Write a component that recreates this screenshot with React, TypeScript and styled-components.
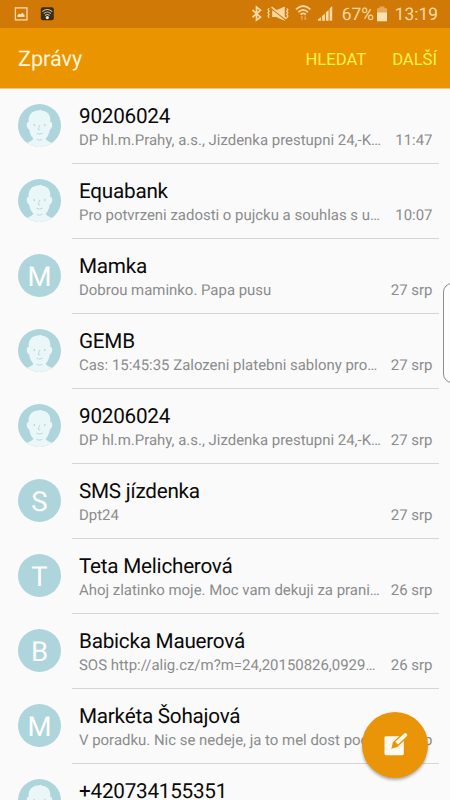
import React from "react";
import styled, { createGlobalStyle } from "styled-components";

const GlobalStyle = createGlobalStyle`
  html, body { margin: 0; padding: 0; overflow: hidden; }
  body { background: #fafafa; font-family: Roboto, sans-serif; text-rendering: geometricPrecision; }
  * { box-sizing: border-box; }
`;

const Screen = styled.div`
  position: relative;
  width: 450px;
  height: 800px;
  overflow: hidden;
  display: flex;
  flex-direction: column;
  background: #fafafa;
`;

const StatusBar = styled.div`
  flex: none;
  height: 28px;
  background: #d07906;
  color: #fbd9a6;
  display: flex;
  align-items: center;
  padding: 0 12px 0 14px;
  svg { display: block; flex: none; }
`;

const Notifications = styled.div`
  display: flex;
  gap: 12px;
  flex: 1;
`;

const StatusIcons = styled.div`
  display: flex;
  align-items: center;
`;

const StatusText = styled.span<{ $width: number; $gap?: number }>`
  font-size: 17.4px;
  font-weight: 400;
  line-height: 28px;
  padding-top: 1px;
  width: ${(p) => p.$width}px;
  margin-right: ${(p) => p.$gap ?? 0}px;
  display: flex;
  justify-content: flex-end;
  white-space: nowrap;
`;

const AppBar = styled.header`
  flex: none;
  height: 61px;
  background: #ea9500;
  border-bottom: 1px solid #f3c778;
  display: flex;
  align-items: center;
  padding: 3px 13px 0 18px;
`;

const Title = styled.h1`
  margin: 0;
  flex: 1;
  font-size: 21.6px;
  font-weight: 400;
  color: #fff6dc;
`;

const Action = styled.button`
  border: 0;
  padding: 0;
  background: none;
  margin-left: 26px;
  font: 400 16.6px Roboto, sans-serif;
  color: #fff24e;
`;

const List = styled.main`
  flex: 1;
  min-height: 0;
  overflow: hidden;
`;

const Row = styled.article`
  height: 75px;
  display: flex;
  padding-left: 18px;
`;

const AvatarCircle = styled.div`
  flex: none;
  width: 43px;
  height: 43px;
  margin: 15px 11px 0 0;
  border-radius: 50%;
  background: #add5db;
  color: #fff;
  font-size: 27.5px;
  font-weight: 400;
  line-height: 45px;
  text-align: center;
  svg { display: block; }
`;

const Body = styled.div`
  width: 367px;
  height: 75px;
  border-bottom: 1px solid #d4d5d6;
  padding: 16px 6.5px 0 7px;
`;

const Name = styled.div`
  font-size: 20.7px;
  letter-spacing: -0.24px;
  line-height: 25px;
  color: #0a0a0a;
  white-space: nowrap;
`;

const Details = styled.div`
  display: flex;
  justify-content: space-between;
  font-size: 14.95px;
  line-height: 20px;
  color: #8b8c8d;
  white-space: nowrap;
`;

const Time = styled.time`
  flex: none;
`;

const Fab = styled.button`
  position: absolute;
  left: 362px;
  top: 712px;
  width: 66px;
  height: 66px;
  border: 0;
  border-radius: 50%;
  padding: 0;
  background: #ea9507;
  box-shadow: 0 2px 3px rgba(0, 0, 0, 0.3);
  svg { display: block; }
`;

const EdgeHandle = styled.div`
  position: absolute;
  left: 443px;
  top: 283px;
  width: 20px;
  height: 100px;
  border: 1px solid #8d8d8d;
  border-radius: 9px;
  background: #fdfdfd;
`;

const Portrait = () => (
  <svg width="43" height="43" viewBox="0 0 43 43">
    <defs>
      <clipPath id="disc"><circle cx="21.5" cy="21.5" r="21.5" /></clipPath>
    </defs>
    <g clipPath="url(#disc)">
      <path
        fill="#eaf6f8"
        d="M10.6 18C10 10.5 14 6.8 20 6.4L23 5.7L24 6.7C30 7 33 11.5 32.3 18C35.1 17.6 34.9 24 31.9 25.4C31 30 29.4 33 27.7 34.5C28.2 37 32 38 36 39.4V43H7V39.4C11 38 14.8 37 15.3 34.5C13.4 32.8 12 30 11.1 25.4C8.1 24 8 17.7 10.6 18Z"
      />
      <g fill="none" stroke="#b4d7dd" strokeLinecap="round">
        <path d="M16.3 20.5V21.5M26.8 20.5V21.5" strokeWidth="1.3" />
        <path d="M21.7 21.3L20.2 25.2Q20.2 26 21.7 25.9M18.9 29.5Q21.8 31 24.4 29.3M19 35.6Q21.5 37 24 35.6" strokeWidth="0.9" />
      </g>
    </g>
  </svg>
);

const ImageIcon = () => (
  <svg width="14" height="14" viewBox="0 0 14 14">
    <rect x="1.4" y="0.9" width="11.6" height="12" fill="none" stroke="#fbd9a6" strokeWidth="1.3" />
    <path fill="#fbe3bd" d="M3.5 10V8.2L5.3 6.4L6.5 7.5L8.4 5.7L10.5 8V10Z" />
  </svg>
);

const WifiBadgeIcon = () => (
  <svg width="14" height="14" viewBox="0 0 14 14">
    <rect x="0.8" y="0.3" width="13" height="13" rx="2" fill="#3c2c12" />
    <g fill="none" stroke="#c6bda5" strokeWidth="1.1">
      <path d="M2.3 4.6Q7.3 .3 12.3 4.6M3.8 6.6Q7.3 3.5 10.8 6.6M5.1 8.5Q7.3 6.6 9.5 8.5" />
    </g>
    <circle cx="7.3" cy="10.6" r="1.6" fill="#f7e8cc" />
  </svg>
);

const SystemIcons = () => (
  <svg width="84" height="20" viewBox="250.8 4 84 20">
    <g fill="none" stroke="#fbd9a6">
      <path d="M251.3 10L259.3 17.2L255.3 20.1V7L259.3 10.2L251.3 17.3" strokeWidth="1.7" />
      <path d="M268 8.3L266.8 9.7L268 11.2L266.8 12.8L268 14.4L266.8 16L268 17.8M285.5 8.3L286.7 9.7L285.5 11.2L286.7 12.8L285.5 14.4L286.7 16L285.5 17.8" strokeWidth="1.2" />
      <path d="M294.8 9.3Q302 2.8 309.2 9.3M297.2 12.1Q302 7.6 306.8 12.1M299.4 14.5Q302 12.2 304.6 14.5" strokeWidth="1.8" />
    </g>
    <path fill="#fbd9a6" d="M271 10.3H275L283.5 6.5V20.7L275 17H271Z" />
    <path d="M270 8.6L285 20.2" stroke="#d07906" strokeWidth="1.1" />
    <path d="M270.4 7.2L285.4 18.8" stroke="#fbd9a6" strokeWidth="1.5" />
    <path fill="#e6a454" d="M300.6 15.5L302.2 17.5H301.2V20.3H300V17.5H299ZM304 20.3L302.4 18.3H303.4V15.5H304.6V18.3H305.6Z" />
    <path fill="#fbd9a6" d="M316.8 20.8V19.5L319.9 17.1V20.8ZM320.9 20.8V16L323.7 13.6V20.8ZM324.7 20.8V12.3L327.4 9.9V20.8ZM328.4 20.8V8.5L331 6.1V20.8Z" />
  </svg>
);

const BatteryIcon = () => (
  <svg width="12" height="16" viewBox="0 0 12 16">
    <path fill="#e7aa5d" d="M3.5 0.5H8.5V2.3H11V15.2H1V2.3H3.5Z" />
    <path fill="#fce1b5" d="M1 6.5H11V15.2H1Z" />
  </svg>
);

const ComposeIcon = () => (
  <svg width="66" height="66" viewBox="0 0 66 66">
    <path fill="#fffaf0" d="M24 24.2H41.8V41.8Q41.8 43.2 40.4 43.2H24Q22.5 43.2 22.5 41.8V25.6Q22.5 24.2 24 24.2Z" />
    <path fill="#ea9507" d="M29.3 36.7L30.9 30.2L40.8 20.8L46 25L35.4 35Z" />
    <path fill="#fffaf0" d="M33.3 29.7L42.2 21.5Q43.4 20.5 44.4 21.5L44.8 22Q45.8 23 44.8 24.2L36 32.4Z" />
  </svg>
);

type Message = {
  name: string;
  preview: string;
  time: string;
  initial?: string;
};

const messages: Message[] = [
  { name: "90206024", preview: "DP hl.m.Prahy, a.s., Jizdenka prestupni 24,-K…", time: "11:47" },
  { name: "Equabank", preview: "Pro potvrzeni zadosti o pujcku a souhlas s u…", time: "10:07" },
  { name: "Mamka", preview: "Dobrou maminko. Papa pusu", time: "27 srp", initial: "M" },
  { name: "GEMB", preview: "Cas: 15:45:35 Zalozeni platebni sablony pro…", time: "27 srp" },
  { name: "90206024", preview: "DP hl.m.Prahy, a.s., Jizdenka prestupni 24,-K…", time: "27 srp" },
  { name: "SMS jízdenka", preview: "Dpt24", time: "27 srp", initial: "S" },
  { name: "Teta Melicherová", preview: "Ahoj zlatinko moje. Moc vam dekuji za prani…", time: "26 srp", initial: "T" },
  { name: "Babicka Mauerová", preview: "SOS http://alig.cz/m?m=24,20150826,0929…", time: "26 srp", initial: "B" },
  { name: "Markéta Šohajová", preview: "V poradku. Nic se nedeje, ja to mel dost poc…", time: "26 srp", initial: "M" },
  { name: "+420734155351", preview: "", time: "" },
];

export default function App() {
  return (
    <Screen>
      <GlobalStyle />
      <StatusBar>
        <Notifications>
          <ImageIcon />
          <WifiBadgeIcon />
        </Notifications>
        <StatusIcons>
          <SystemIcons />
          <StatusText $width={38} $gap={2}>67%</StatusText>
          <BatteryIcon />
          <StatusText $width={50}>13:19</StatusText>
        </StatusIcons>
      </StatusBar>
      <AppBar>
        <Title>Zprávy</Title>
        <Action>HLEDAT</Action>
        <Action>DALŠÍ</Action>
      </AppBar>
      <List>
        {messages.map((m, i) => (
          <Row key={i}>
            <AvatarCircle>{m.initial ?? <Portrait />}</AvatarCircle>
            <Body>
              <Name>{m.name}</Name>
              <Details>
                <span>{m.preview}</span>
                <Time>{m.time}</Time>
              </Details>
            </Body>
          </Row>
        ))}
      </List>
      <EdgeHandle />
      <Fab aria-label="Nová zpráva">
        <ComposeIcon />
      </Fab>
    </Screen>
  );
}
